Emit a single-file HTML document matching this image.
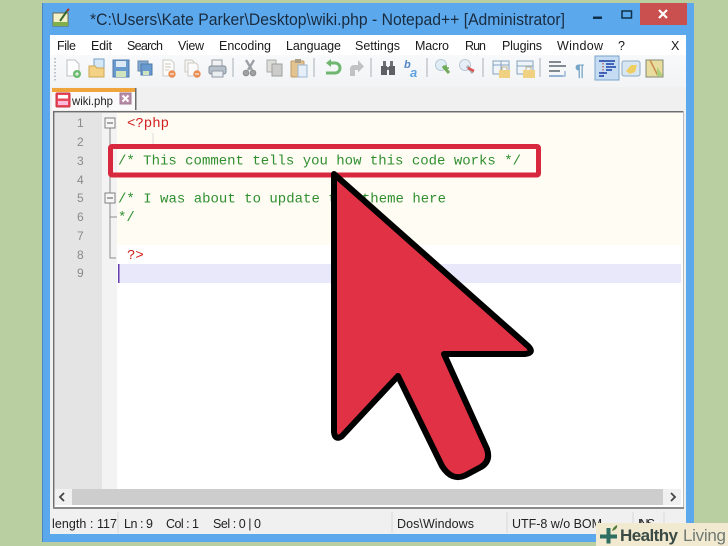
<!DOCTYPE html>
<html><head><meta charset="utf-8"><style>
html,body{margin:0;padding:0;background:#b9cfa1;width:728px;height:546px;overflow:hidden}
svg{display:block;filter:blur(.35px)}
.u{font-family:"Liberation Sans",sans-serif}
.m{font-family:"Liberation Sans",sans-serif;font-size:12.5px;fill:#1a1a1a}
.c{font-family:"Liberation Mono",monospace;font-size:14px;fill:#2f8f2f}
.r{font-family:"Liberation Mono",monospace;font-size:14px;fill:#d02020}
.n{font-family:"Liberation Sans",sans-serif;font-size:12px;fill:#8a8a8a}
</style></head><body>
<svg width="728" height="546" viewBox="0 0 728 546" xmlns="http://www.w3.org/2000/svg">
<defs><linearGradient id="tb" x1="0" y1="0" x2="0" y2="1"><stop offset="0" stop-color="#f7f9fb"/><stop offset="1" stop-color="#f1f3f5"/></linearGradient></defs>
<rect width="728" height="546" fill="#b9cfa1"/>
<!-- window frame -->
<rect x="42" y="3" width="652" height="539" fill="#5ba8ec"/>
<rect x="42" y="3" width="1" height="539" fill="#4a86b8"/>
<rect x="640" y="3" width="47" height="22" fill="#c9504f"/>
<path d="M659 10l8 8M667 10l-8 8" stroke="#fff" stroke-width="2.2"/>
<rect x="593" y="16.500" width="9" height="2.500" fill="#10304a"/>
<rect x="622" y="11" width="9.500" height="7" fill="none" stroke="#10304a" stroke-width="1.500"/>
<!-- app icon -->
<rect x="53" y="13" width="15" height="13" fill="#f4f0c8" stroke="#6a6a50" stroke-width="1"/>
<rect x="53" y="22" width="15" height="4" fill="#7fb04a"/>
<path d="M60 21l7-10" stroke="#3a6a30" stroke-width="2"/>
<path d="M67 11l2-2" stroke="#b03020" stroke-width="2"/>
<!-- title text -->
<text class="u" x="90" y="25" font-size="16.500" fill="#1a2c40" textLength="475" lengthAdjust="spacingAndGlyphs">*C:\Users\Kate Parker\Desktop\wiki.php - Notepad++ [Administrator]</text>
<!-- client -->
<rect x="50" y="35" width="636" height="499" fill="#f0f0f0"/>
<rect x="50" y="35" width="636" height="20" fill="#fff"/>
<rect x="50" y="55" width="636" height="32" fill="url(#tb)"/>
<!-- menu -->
<text class="m" x="57" y="50" textLength="19">File</text>
<text class="m" x="91" y="50" textLength="21">Edit</text>
<text class="m" x="127" y="50" textLength="36">Search</text>
<text class="m" x="178" y="50" textLength="26">View</text>
<text class="m" x="219" y="50" textLength="52">Encoding</text>
<text class="m" x="286" y="50" textLength="55">Language</text>
<text class="m" x="355" y="50" textLength="45">Settings</text>
<text class="m" x="415" y="50" textLength="34">Macro</text>
<text class="m" x="465" y="50" textLength="21">Run</text>
<text class="m" x="502" y="50" textLength="40">Plugins</text>
<text class="m" x="557" y="50" textLength="46">Window</text>
<text class="m" x="618" y="50">?</text>
<text class="m" x="671" y="50">X</text>
<!-- toolbar grip -->
<path d="M55 58v24" stroke="#9a9ab0" stroke-width="1.200" stroke-dasharray="1.500 2"/>
<g opacity=".82">
<!-- new -->
<path d="M67 60h8l4 4v12h-12z" fill="#fff" stroke="#b5b5b5"/><circle cx="77" cy="74" r="4" fill="#4caf50"/><path d="M75 74h4M77 72v4" stroke="#fff"/>
<!-- open -->
<path d="M94 59h10v10h-10z" fill="#cfe4f5" stroke="#5a8ec0"/><path d="M89 66h6l2 2h7v9h-15z" fill="#f3cb6c" stroke="#c79632"/>
<!-- save -->
<rect x="113" y="60" width="16" height="17" fill="#4a86c8" stroke="#2f5f98"/><rect x="116" y="61" width="10" height="6" fill="#d8e8f6"/><rect x="116" y="71" width="10" height="6" fill="#c8e0b0"/>
<!-- save all -->
<rect x="138" y="61" width="10" height="10" fill="#6d9ccb" stroke="#47709a"/><rect x="141" y="64" width="11" height="11" fill="#4a86c8" stroke="#2f5f98"/><rect x="143" y="71" width="6" height="4" fill="#c8e0b0"/>
<!-- close -->
<path d="M163 60h8l3 3v13h-11z" fill="#fdfdfd" stroke="#c4c0b8"/><path d="M165 64h6M165 67h6M165 70h4" stroke="#c8c0a8"/><circle cx="172" cy="74" r="3.700" fill="#e87830"/><path d="M170 74h4" stroke="#fff"/>
<!-- close all -->
<path d="M185 60h7l2 2v10h-9z" fill="#f4f4f0" stroke="#c4c0b8"/><path d="M188 63h8l2 2v11h-10z" fill="#fdfdfd" stroke="#c4c0b8"/><circle cx="197" cy="74" r="3.700" fill="#e87830"/><path d="M195 74h4" stroke="#fff"/>
<!-- print -->
<path d="M212 60h10v6h-10z" fill="#f2f2f2" stroke="#7d8794"/><rect x="209" y="66" width="17" height="8" rx="2" fill="#a9b6c2" stroke="#6b7684"/><rect x="212" y="71" width="11" height="6" fill="#e8edf0" stroke="#7d8794"/>
<path d="M233 58v19M314 58v19M371 58v19M427 58v19M483 58v19M540 58v19" stroke="#a8b0b4" stroke-width="1.200"/>
<!-- cut -->
<path d="M254 60l-6 10M246 60l6 10" stroke="#8a8f94" stroke-width="2.400"/><circle cx="246" cy="73" r="2.800" fill="#8f8f8f" stroke="#777"/><circle cx="253" cy="73" r="2.800" fill="#8f8f8f" stroke="#777"/>
<!-- copy -->
<rect x="267" y="60" width="9" height="12" fill="#d8d8d4" stroke="#9c9c98"/><rect x="272" y="64" width="10" height="12" fill="#c4c4c0" stroke="#8c8c88"/>
<!-- paste -->
<rect x="291" y="61" width="13" height="16" rx="1" fill="#e0b878" stroke="#b58a4c"/><rect x="295" y="59" width="6" height="4" fill="#9c8c70"/><rect x="298" y="65" width="9" height="12" fill="#e4eefa" stroke="#88a8c8"/>
<!-- undo -->
<path d="M328 63h7a5 5 0 0 1 0 10h-9" fill="none" stroke="#52a852" stroke-width="3"/><path d="M331 59l-5 4 5 4z" fill="#52a852"/>
<!-- redo -->
<path d="M360 65h-6a4 4 0 0 0-4 4v7h5v-6h5z" fill="#b4b8b8"/><path d="M358 60l6 6.500-6 6z" fill="#b4b8b8"/>
<!-- find -->
<path d="M381 66h6v9h-6zM389 66h6v9h-6z" fill="#3c4044"/><path d="M383 61h3v5h-3zM390 61h3v5h-3z" fill="#505458"/><rect x="387" y="67" width="2" height="3" fill="#505458"/>
<!-- replace -->
<text class="u" x="404" y="68" font-size="11" font-weight="bold" font-style="italic" fill="#2f6fb8">b</text>
<text class="u" x="410" y="77" font-size="13" font-weight="bold" font-style="italic" fill="#3f90d8">a</text>
<!-- zoom in -->
<circle cx="441" cy="65" r="5.500" fill="#dcecf6" stroke="#a8c0d0"/><path d="M443 66l6 7" stroke="#5a9a3a" stroke-width="3"/><path d="M443 68h6M446 65v6" stroke="#4a9a30" stroke-width="1.500"/>
<!-- zoom out -->
<circle cx="465" cy="65" r="5.500" fill="#e4ecf6" stroke="#b0c0d0"/><path d="M467 66l6 7" stroke="#98a0a8" stroke-width="3"/><path d="M468 68l6 3" stroke="#d83030" stroke-width="2.500"/>
<!-- sync v -->
<rect x="493" y="61" width="16" height="13" fill="#eef4fa" stroke="#6e92b4"/><path d="M493 65h16M501 61v13" stroke="#6e92b4"/><rect x="499" y="70" width="11" height="8" fill="#f0c868"/><path d="M502 70v-3h5v3" fill="none" stroke="#b8a878"/>
<!-- sync h -->
<rect x="517" y="61" width="16" height="13" fill="#eef4fa" stroke="#6e92b4"/><path d="M517 66h16" stroke="#6e92b4"/><rect x="523" y="70" width="12" height="8" fill="#f0c868"/><path d="M526 70v-3h5v3" fill="none" stroke="#b8a878"/>
<!-- wrap -->
<path d="M549 62h12M549 66h17M549 71h11" stroke="#3d4752" stroke-width="1.500"/><path d="M549 76h14" stroke="#5a88c0" stroke-width="1.500"/><path d="M565 71v5h-2" stroke="#5a88c0" fill="none"/>
<!-- pilcrow -->
<text class="u" x="575" y="76" font-size="17" font-weight="bold" fill="#5b93bc">¶</text>
</g>
<!-- indent guide -->
<rect x="595" y="56" width="24" height="24" fill="#c5dcf2" stroke="#7ca5cc"/>
<path d="M603 60v16" stroke="#c03030" stroke-dasharray="1.500 1.500"/>
<path d="M599 61h16M606 64h8M606 67h10M606 70h6M599 73h8M599 76h5" stroke="#1a3fa8" stroke-width="1.500"/>
<g opacity=".85">
<!-- monitoring -->
<rect x="622" y="61" width="18" height="15" rx="2" fill="#d4e4f2" stroke="#7c9cb8"/><path d="M626 71l5-6h6l-2 7-5 2z" fill="#eec848"/>
<!-- map -->
<rect x="646" y="60" width="17" height="17" fill="#e6d890" stroke="#707860"/><path d="M650 60l8 16" stroke="#c87830" stroke-width="1.500"/><path d="M657 67l6 9h-6z" fill="#a0c860"/>
</g>
<!-- tab -->
<rect x="52" y="88" width="84" height="22" fill="#fafafa"/>
<rect x="52" y="88" width="84" height="4" fill="#f0a43c"/>
<rect x="135" y="88" width="1.500" height="22" fill="#6b6b6b"/>
<rect x="56" y="93" width="14" height="14" rx="1" fill="#e84a5a" stroke="#c83040"/><rect x="58" y="95" width="10" height="3.500" fill="#fff"/><rect x="58" y="101" width="10" height="4" fill="#fbd"/>
<text class="u" x="72" y="105" font-size="12" fill="#222" textLength="41" lengthAdjust="spacingAndGlyphs">wiki.php</text>
<rect x="120" y="93" width="11" height="11" fill="#b88ca8" stroke="#a07890"/><path d="M122.500 95.500l6 6M128.500 95.500l-6 6" stroke="#fff" stroke-width="2"/>
<!-- editor -->
<rect x="53" y="111" width="630" height="398" fill="#fff"/>
<rect x="53" y="111" width="630" height="1.500" fill="#6e6e6e"/>
<rect x="53" y="111" width="1.500" height="398" fill="#6e6e6e"/>
<rect x="683" y="111" width="1" height="398" fill="#bbb"/>
<rect x="53" y="507" width="631" height="2" fill="#8a8a8a"/>
<rect x="55" y="113" width="47" height="376" fill="#e4e4e4"/>
<rect x="102" y="113" width="15" height="376" fill="#f3f3f3"/>
<rect x="117" y="113" width="564" height="132" fill="#fffcf4"/>
<rect x="119" y="264" width="562" height="19" fill="#e8e8fa"/>
<rect x="118" y="264" width="1.500" height="19" fill="#6a3ab0"/>
<!-- line numbers -->
<text class="n" x="77" y="127">1</text><text class="n" x="77" y="146">2</text><text class="n" x="77" y="165">3</text><text class="n" x="77" y="184">4</text><text class="n" x="77" y="202">5</text><text class="n" x="77" y="221">6</text><text class="n" x="77" y="240">7</text><text class="n" x="77" y="259">8</text><text class="n" x="77" y="277">9</text>
<!-- fold -->
<path d="M110 128v130h6M110 217h7" fill="none" stroke="#8e8e8e"/>
<rect x="105" y="118" width="10" height="10" fill="#f6f6f6" stroke="#808080"/><path d="M107 123h6" stroke="#555"/>
<rect x="105" y="193" width="10" height="10" fill="#f6f6f6" stroke="#808080"/><path d="M107 198h6" stroke="#555"/>
<path d="M153 133v14" stroke="#ddd"/>
<!-- code -->
<text class="r" x="127" y="127">&lt;?php</text>
<text class="c" x="118" y="164.500" textLength="403">/* This comment tells you how this code works */</text>
<text class="c" x="118" y="202.500" textLength="328">/* I was about to update the theme here</text>
<text class="c" x="118" y="221">*/</text>
<text class="r" x="127" y="259">?&gt;</text>
<!-- red box -->
<rect x="110.500" y="146.500" width="428" height="28.500" rx="1.500" fill="none" stroke="#d8283e" stroke-width="5"/>
<!-- scrollbar -->
<rect x="55" y="489" width="626" height="16" fill="#f0f0f0"/>
<rect x="72" y="489" width="591" height="16" fill="#cdcdcd"/>
<path d="M64 493l-4 4 4 4" fill="none" stroke="#444" stroke-width="1.800"/>
<path d="M671 493l4 4-4 4" fill="none" stroke="#444" stroke-width="1.800"/>
<!-- status -->
<rect x="50" y="509" width="636" height="25" fill="#f0f0f0"/>
<path d="M118 512v21M392 512v21M507 512v21M633 512v21M664 512v21" stroke="#d8d8d8"/>
<g class="u" font-size="12.500" fill="#222">
<text x="52" y="528" textLength="65">length : 117</text>
<text x="124" y="528" textLength="29">Ln : 9</text>
<text x="166" y="528" textLength="33">Col : 1</text>
<text x="213" y="528" textLength="48">Sel : 0 | 0</text>
<text x="397" y="528" textLength="77">Dos\Windows</text>
<text x="512" y="528" textLength="90">UTF-8 w/o BOM</text>
<text x="638" y="528" textLength="17">INS</text>
</g>
<!-- arrow -->
<path d="M334 174L528 346Q535 353 525 354L444 354L487 449Q491 461 481 467L466 475Q452 482 442 466L398 376L342 436Q335 441 334 432Z" fill="#e03244" stroke="#000" stroke-width="6" stroke-linejoin="round"/>
<!-- badge -->
<rect x="596" y="523" width="132" height="23" fill="#f2ead0"/>
<path d="M606.500 528h4v6.500h6.500v4h-6.500v5h-4v-5h-6.500v-4h6.500z" fill="#2f6f62"/>
<path d="M612 531q1-4 5-6q1 4-5 6z" fill="#4f7a3a"/>
<text class="u" x="620" y="541" font-size="17" font-weight="bold" fill="#3a4a44" textLength="58">Healthy</text>
<text class="u" x="683" y="541" font-size="17" fill="#6f7a74" textLength="43">Living</text>
</svg>
</body></html>
